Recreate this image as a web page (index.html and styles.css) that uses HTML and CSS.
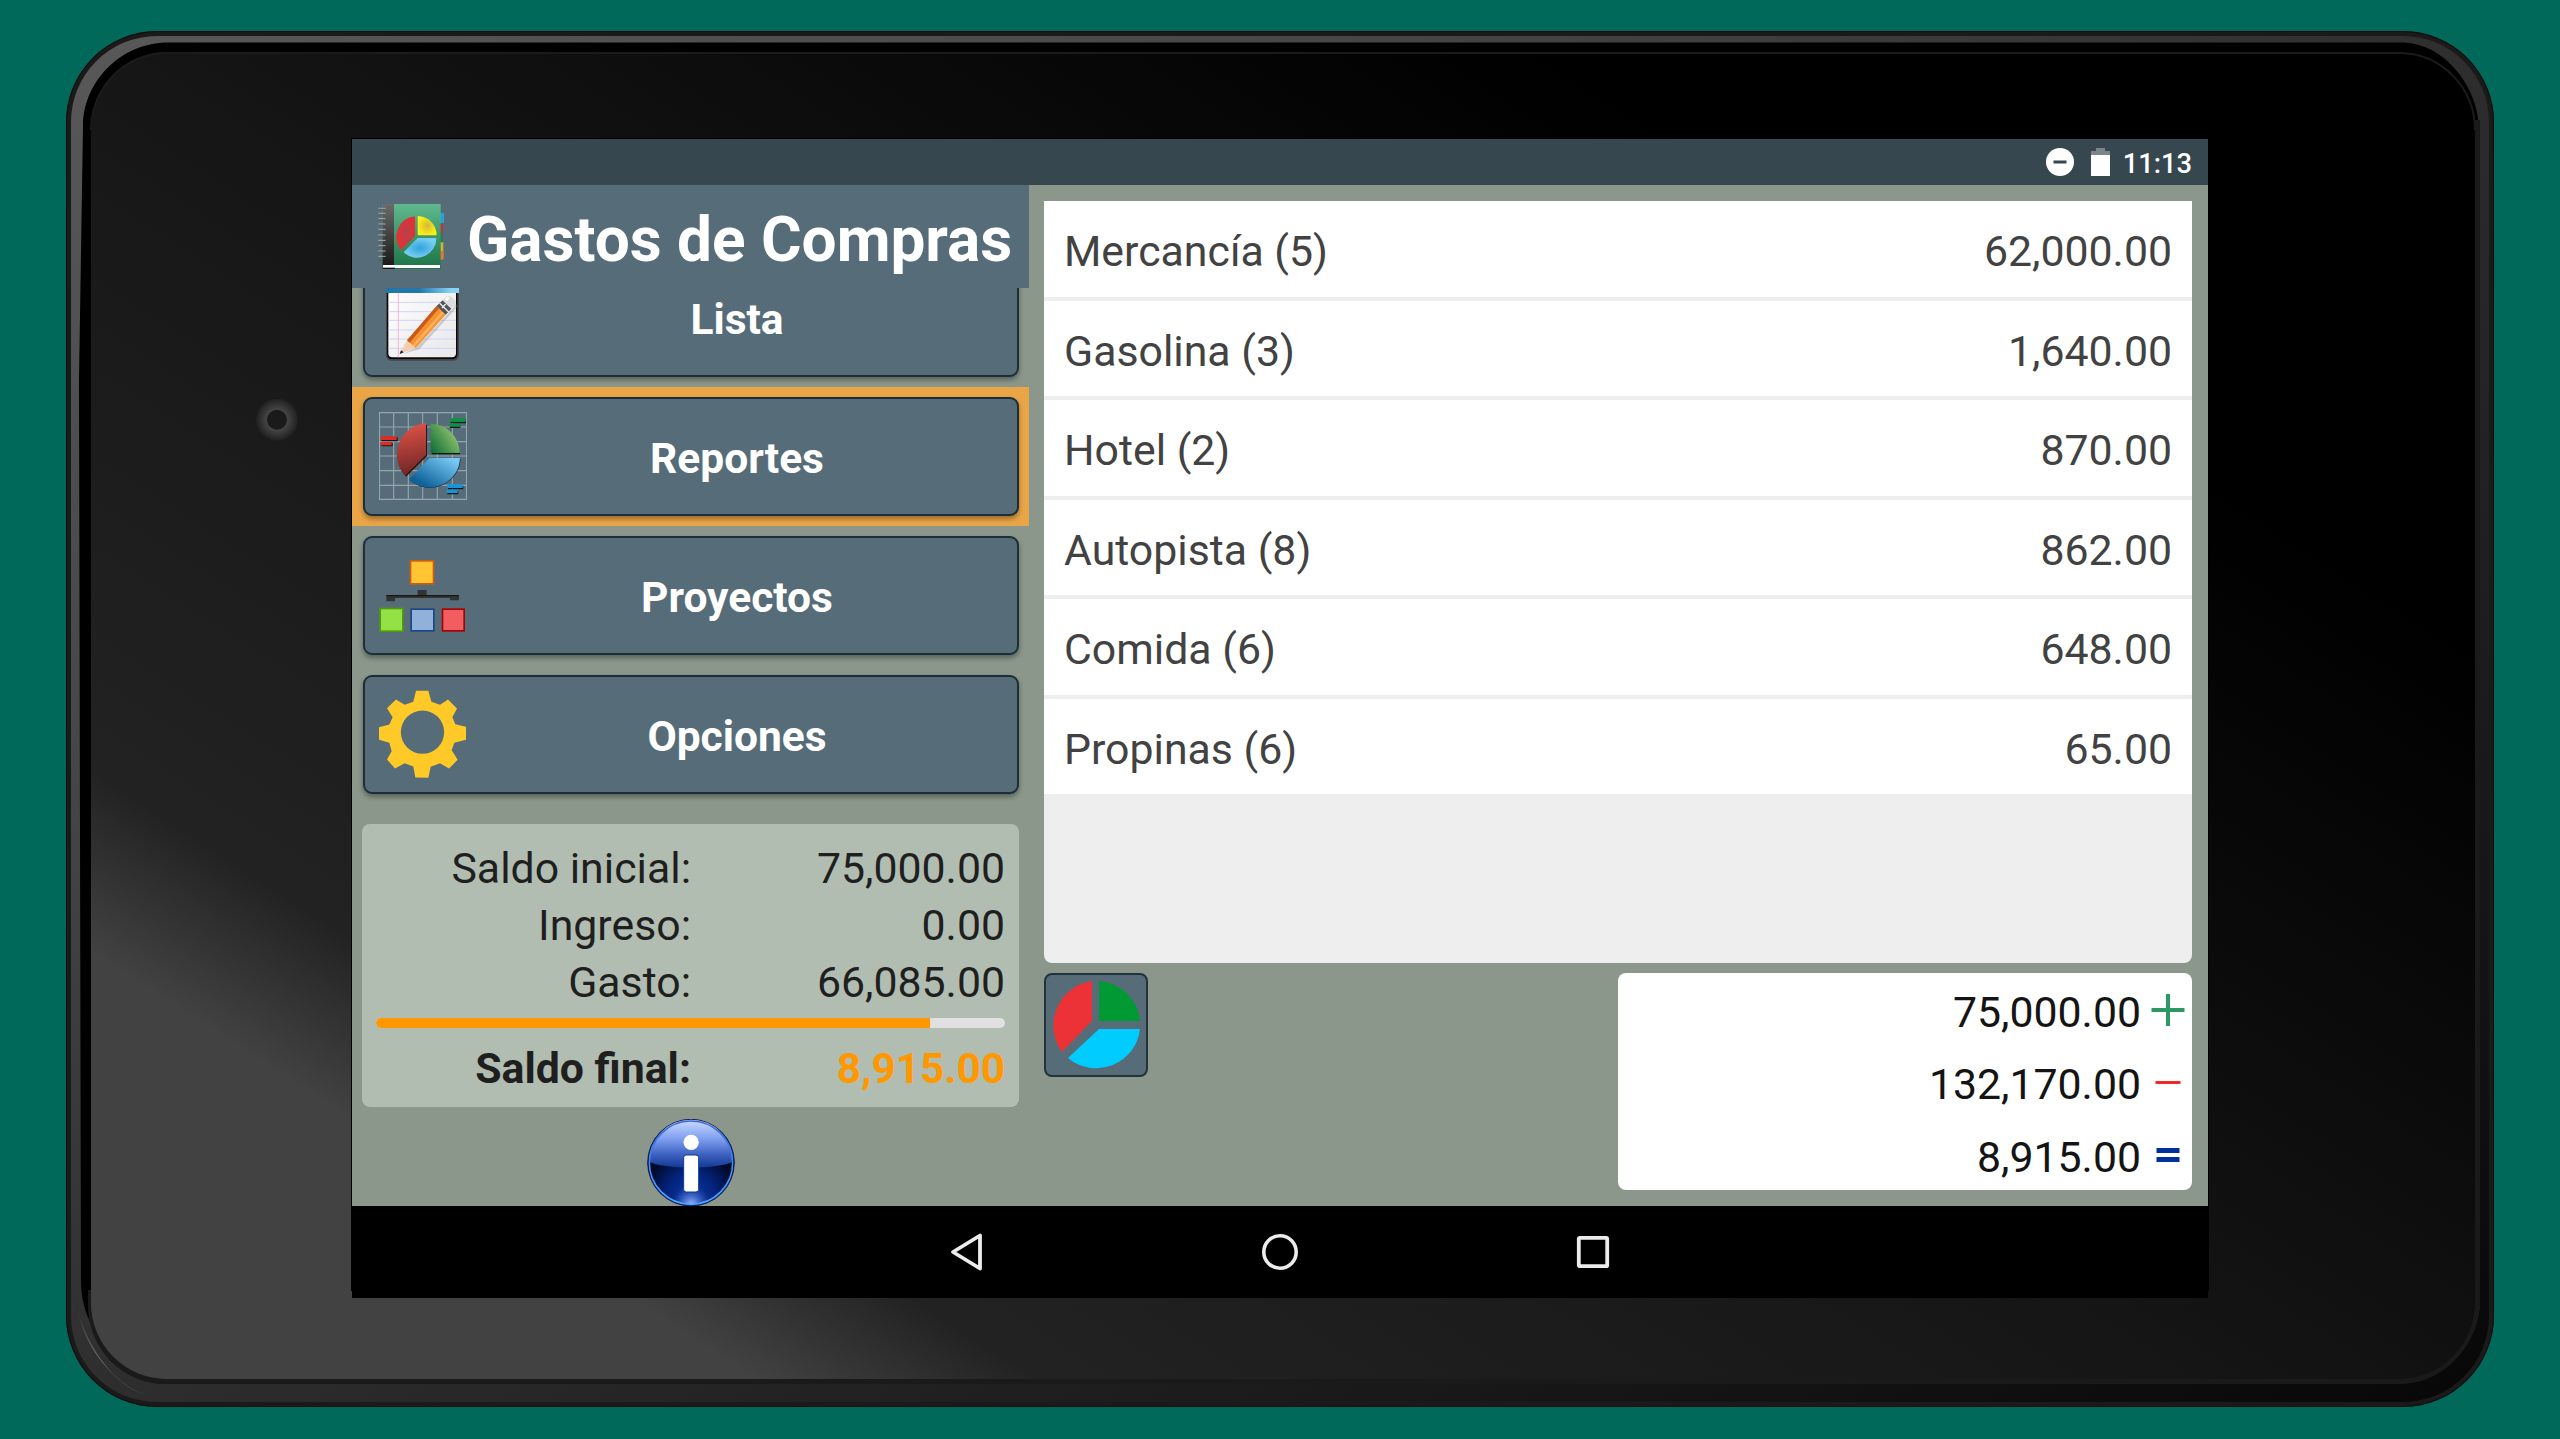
FILE: index.html
```html
<!DOCTYPE html>
<html lang="es">
<head>
<meta charset="utf-8">
<title>Gastos de Compras</title>
<link rel="stylesheet" href="styles.css">
</head>
<body>
<main class="stage">
  <svg class="tablet" viewBox="0 0 2560 1439" aria-hidden="true">
    <defs>
      <linearGradient id="glass" gradientUnits="userSpaceOnUse" x1="426.6" y1="-663.6" x2="-407" y2="633">
        <stop offset="0" stop-color="#000"/><stop offset=".512" stop-color="#161616"/>
        <stop offset=".9" stop-color="#222"/><stop offset="1" stop-color="#424242"/>
      </linearGradient>
      <linearGradient id="rim" x1="0" y1="0" x2="1" y2="1">
        <stop offset="0" stop-color="#585858"/><stop offset=".25" stop-color="#484848"/>
        <stop offset=".5" stop-color="#2e2e2e"/><stop offset="1" stop-color="#070707"/>
      </linearGradient>
      <radialGradient id="shine" gradientUnits="userSpaceOnUse" cx="98" cy="1366" r="62">
        <stop offset="0" stop-color="#747474"/><stop offset="1" stop-color="#2b2b2b"/>
      </radialGradient>
      <radialGradient id="lens">
        <stop offset=".45" stop-color="#484848"/><stop offset="1" stop-color="#202020"/>
      </radialGradient>
    </defs>
    <rect x="66" y="31" width="2428" height="1376" rx="91" fill="#1a1a1a"/>
    <rect x="66.500" y="31.500" width="2427" height="1375" rx="91" fill="none" stroke="#0d0d0d"/>
    <rect x="71" y="36" width="2418" height="1366" rx="86" fill="url(#rim)"/>
    <path d="M75 1290C77 1325 90 1352 115 1376C127 1388 140 1395 156 1398C128 1391 110 1374 96 1352C84 1333 77 1312 75 1290Z" fill="url(#shine)"/>
    <path d="M168 42.500H2405C2446 45 2474 86 2478 118V1300H92V1325C84 1312 81 1295 81 1280L79 380L83 125C84 80 122 42.500 168 42.500Z" fill="#000"/>
    <path d="M2475 118V1309A75 75 0 0 1 2400 1384H166A78 78 0 0 1 88 1306V1290H92V1309A72 72 0 0 0 164 1379H2402A73 73 0 0 0 2475 1306Z" fill="#1a1a1a"/>
    <rect x="2475" y="120" width="5" height="1190" fill="#1a1a1a"/>
    <path d="M164 1384A75 75 0 0 1 92 1325L92 1300H2480A84 84 0 0 1 2402 1384Z" fill="#1a1a1a"/>
    <rect x="91" y="52" width="2384" height="1327" rx="76" fill="url(#glass)"/>
    <path d="M91 130A76 77 0 0 1 168 53H2400A76 77 0 0 1 2475 130" fill="none" stroke="#1b1b1b" stroke-width="2"/>
    <circle cx="277" cy="419.700" r="21" fill="url(#lens)"/>
    <circle cx="277" cy="419.700" r="10" fill="#1a1a1a"/>
    <rect x="351" y="138" width="1858" height="1153" fill="#000"/>
  </svg>

  <section class="screen">
    <div class="status">
      <svg class="status-dnd" viewBox="0 0 28 28"><circle cx="14" cy="14" r="14" fill="#fff"/><path d="M7.500 14h13" stroke="#37474f" stroke-width="3"/></svg>
      <svg class="status-battery" viewBox="0 0 19 28"><path d="M0 3h5V0h9v3h5v5H0z" fill="#7a868c"/><path d="M0 7h19v21H0z" fill="#fff"/></svg>
      <span class="status-time">11:13</span>
    </div>

    <div class="app">
      <aside class="side">
        <header class="header">
          <svg class="header-icon" viewBox="78 60 198 195">
            <defs>
              <linearGradient id="cover" x1="0" y1="0" x2="0" y2="1"><stop offset="0" stop-color="#5fb98c"/><stop offset="1" stop-color="#1c7447"/></linearGradient>
              <linearGradient id="spine" x1="0" y1="0" x2="0" y2="1"><stop offset="0" stop-color="#6b6b6b"/><stop offset="1" stop-color="#151515"/></linearGradient>
              <radialGradient id="hr"><stop offset="0" stop-color="#b8404a"/><stop offset="1" stop-color="#e53035"/></radialGradient>
              <radialGradient id="hy"><stop offset="0" stop-color="#d3b836"/><stop offset="1" stop-color="#fbf014"/></radialGradient>
              <radialGradient id="hb"><stop offset="0" stop-color="#2fa3dc"/><stop offset="1" stop-color="#78cdf2"/></radialGradient>
            </defs>
            <path d="M264 86h9q3 0 3 4v24q0 4-3 4h-9z" fill="#2ba0dc"/>
            <path d="M264 119h9v28h-9z" fill="#c42f38"/><path d="M264 147h8v27h-8z" fill="#1e7f4a"/>
            <path d="M264 175h10v26h-10z" fill="#cdb42c"/><path d="M264 201h11v22q0 4-4 4h-7z" fill="#e07a33"/>
            <rect x="92" y="60" width="174" height="195" fill="url(#cover)"/>
            <path d="M92 60h34v195H92z" fill="url(#spine)"/>
            <path d="M93 243h171v9H93z" fill="#fff"/><path d="M93 251h36v4H93z" fill="#111"/>
            <path d="M79 73h22M79 88h22M79 104h22M79 120h22M79 136h22M79 153h22M79 169h22M79 185h22M79 201h22M79 217h22" stroke="#a8aeb0" stroke-width="3"/>
            <path d="M80 76h18M80 92h18M80 108h18M80 124h18M80 140h18M80 157h18M80 173h18M80 189h18M80 205h18M80 229h12" stroke="#555" stroke-width="2"/>
            <path d="M189 97A62 62 0 0 0 147 198L189 156Z" fill="url(#hr)"/>
            <path d="M197 96A58 58 0 0 1 254 154H197Z" fill="url(#hy)"/>
            <path d="M197 162H253A58 58 0 0 1 155 205Z" fill="url(#hb)"/>
          </svg>
          <h1 class="title">Gastos de Compras</h1>
        </header>

        <nav class="menu">
          <div class="menu-slot">
            <button class="menu-button">
              <svg class="menu-icon" viewBox="57 -21 264 264">
                <defs>
                  <linearGradient id="band"><stop offset=".45" stop-color="#1f78a8"/><stop offset=".9" stop-color="#8bd4f8"/></linearGradient>
                  <linearGradient id="paper" x1="0" y1="0" x2="1" y2="1"><stop offset="0" stop-color="#fff"/><stop offset="1" stop-color="#e8e8ea"/></linearGradient>
                </defs>
                <rect x="78" y="0" width="219" height="242" rx="16" fill="#444"/>
                <rect x="81" y="0" width="211" height="237" rx="14" fill="#080808"/>
                <rect x="85" y="0" width="203" height="232" rx="12" fill="url(#paper)"/>
                <path d="M85 67H288M85 95H288M85 121H288M85 150H288M85 177H288M85 205H288" stroke="#d2d2f8" stroke-width="3"/>
                <path d="M115 39V232" stroke="#f8b3d6" stroke-width="3"/>
                <path d="M78 0H297V39H78Z" fill="url(#band)"/>
                <path d="M128 222L168 203L280 84L288 72L294 78L178 208Z" fill="#777" opacity=".3"/>
                <path d="M119 222L141 181L167 204Z" fill="#f3cdb0"/><path d="M119 222L123 211L131 217Z" fill="#111"/>
                <path d="M141 181L230 78L257 104L167 204Z" fill="#f69230"/>
                <path d="M141 181L230 78L237 85L149 188Z" fill="#c95a1c"/>
                <path d="M157 196L247 94L252 99L163 201Z" fill="#ffb25b"/>
                <path d="M230 78L248 61L274 86L257 104Z" fill="#535353"/><path d="M239 70L266 96M246 84L257 72" stroke="#eee" stroke-width="4"/>
                <path d="M248 61L258 50Q270 44 281 56Q290 66 284 76L274 86Z" fill="#d9dddd"/><path d="M257 61L266 52" stroke="#fff" stroke-width="7"/>
              </svg>
              <span class="menu-label">Lista</span>
            </button>
          </div>
          <div class="menu-slot menu-slot-active">
            <button class="menu-button">
              <svg class="menu-icon" viewBox="57 396 264 264">
                <defs>
                  <linearGradient id="rr" x1=".4" y1="0" x2=".5" y2="1"><stop offset="0" stop-color="#e05246"/><stop offset="1" stop-color="#6d2525"/></linearGradient>
                  <linearGradient id="rg" x1="0" y1="1" x2="1" y2=".3"><stop offset="0" stop-color="#096a35"/><stop offset="1" stop-color="#9ccb72"/></linearGradient>
                  <linearGradient id="rb" x1=".2" y1=".8" x2=".9" y2=".1"><stop offset="0" stop-color="#10639a"/><stop offset="1" stop-color="#78c8f5"/></linearGradient>
                </defs>
                <path d="M58.500 397V659M101 397V659M145 397V659M188 397V659M232 397V659M277 397V659M319.500 397V659M57 398H321M57 441H321M57 485H321M57 528H321M57 572H321M57 616H321M57 658H321" stroke="#95a4ad" stroke-width="3.400" fill="none"/>
                <path d="M201 434A95 95 0 0 0 138 590L201 528Z" fill="#271316"/>
                <path d="M215 435V523H300V519L216 431Z" fill="#06190e"/>
                <path d="M150 601A92 92 0 0 0 302 538L208 534Z" fill="#08263e"/>
                <path d="M198 430A94 94 0 0 0 135 587L198 525Z" fill="url(#rr)"/>
                <path d="M212 431A88 88 0 0 1 299 519H212Z" fill="url(#rg)"/>
                <path d="M208 534H300A91 91 0 0 1 147 598Z" fill="url(#rb)"/>
                <path d="M64 472h49v12H64zM64 489h34v10H64zM272 419h46v11h-46zM270 434h31v10h-31zM264 617h46v11h-46zM262 633h33v10h-33z" fill="#141a1e"/>
                <path d="M62 469h48v11H62zM62 486h33v10H62z" fill="#e12a22"/>
                <path d="M270 415h47v11h-47zM268 431h32v9h-32z" fill="#0a9440"/>
                <path d="M262 613h46v11h-46zM260 629h33v10h-33z" fill="#1595e0"/>
              </svg>
              <span class="menu-label">Reportes</span>
            </button>
          </div>
          <div class="menu-slot">
            <button class="menu-button">
              <svg class="menu-icon" viewBox="57 63 264 264">
                <path d="M173 180h27v15h97v16h-27v-7H105v10H79v-19h94z" fill="#333"/><path d="M79 197H297" stroke="#111" stroke-width="3"/>
                <rect x="151.500" y="92.500" width="69" height="69" fill="#ffc533" stroke="#cf5a10" stroke-width="5"/>
                <rect x="60.500" y="235.500" width="68" height="68" fill="#93e145" stroke="#4f9c0c" stroke-width="5"/>
                <rect x="153.500" y="237.500" width="68" height="65" fill="#90b2da" stroke="#1c4687" stroke-width="5"/>
                <rect x="247.500" y="237.500" width="65" height="65" fill="#f25d5f" stroke="#a20306" stroke-width="5"/>
              </svg>
              <span class="menu-label">Proyectos</span>
            </button>
          </div>
          <div class="menu-slot">
            <button class="menu-button">
              <svg class="menu-icon" viewBox="57 481.500 264 264">
                <path fill="#ffca28" fill-rule="evenodd" d="M168 484L205 484L214 517L240 526L264 510L291 537L277 563L286 584L318 592V631L283 640L275 662L293 691L267 717L240 701L212 712L205 745L166 744L160 711L134 701L105 717L81 690L95 665L88 640L55 630V594L88 585L98 563L81 536L108 510L134 526L160 517ZM187.500 543A65 65 0 1 0 187.500 673A65 65 0 1 0 187.500 543Z"/>
              </svg>
              <span class="menu-label">Opciones</span>
            </button>
          </div>
        </nav>

        <section class="summary">
          <div class="summary-row"><span class="summary-label">Saldo inicial:</span><span class="summary-value">75,000.00</span></div>
          <div class="summary-row"><span class="summary-label">Ingreso:</span><span class="summary-value">0.00</span></div>
          <div class="summary-row"><span class="summary-label">Gasto:</span><span class="summary-value">66,085.00</span></div>
          <div class="progress"><div class="progress-fill" style="width:88.1%"></div></div>
          <div class="summary-row summary-final"><span class="summary-label">Saldo final:</span><span class="summary-value summary-amount">8,915.00</span></div>
        </section>

        <svg class="info" viewBox="52 57 264 264">
          <defs>
            <linearGradient id="gloss" x1="0" y1="0" x2="0" y2="1"><stop offset="0" stop-color="#cbdcff"/><stop offset=".4" stop-color="#7f9ff0"/><stop offset=".75" stop-color="#3a5ebd"/><stop offset="1" stop-color="#123a94"/></linearGradient>
            <radialGradient id="deep" gradientUnits="userSpaceOnUse" cx="184" cy="290" r="135"><stop offset="0" stop-color="#0b39a5"/><stop offset=".55" stop-color="#03237b"/><stop offset="1" stop-color="#010a2b"/></radialGradient>
            <radialGradient id="glow" gradientUnits="userSpaceOnUse" cx="184" cy="315" r="58"><stop offset="0" stop-color="#a5c1ff"/><stop offset="1" stop-color="#3d66d8" stop-opacity="0"/></radialGradient>
            <linearGradient id="ring" x1="0" y1="0" x2="0" y2="1"><stop offset="0" stop-color="#3866d8"/><stop offset="1" stop-color="#4aa9ff"/></linearGradient>
          </defs>
          <circle cx="184" cy="188" r="130" fill="url(#deep)" stroke="#131a58" stroke-width="3"/>
          <path d="M58 185A126 126 0 0 1 310 185C270 208 98 208 58 185Z" fill="url(#gloss)"/>
          <circle cx="184" cy="188" r="126" fill="url(#glow)"/>
          <circle cx="184" cy="188" r="125" fill="none" stroke="url(#ring)" stroke-width="5"/>
          <circle cx="184.500" cy="127" r="23" fill="#fff"/>
          <rect x="162" y="165" width="45" height="111" rx="8" fill="#fff" stroke="#0c3a9d" stroke-width="3"/>
        </svg>
      </aside>

      <section class="content">
        <div class="list">
          <div class="list-row"><span>Mercancía (5)</span><span>62,000.00</span></div>
          <div class="list-row"><span>Gasolina (3)</span><span>1,640.00</span></div>
          <div class="list-row"><span>Hotel (2)</span><span>870.00</span></div>
          <div class="list-row"><span>Autopista (8)</span><span>862.00</span></div>
          <div class="list-row"><span>Comida (6)</span><span>648.00</span></div>
          <div class="list-row"><span>Propinas (6)</span><span>65.00</span></div>
        </div>
        <div class="bottom">
          <button class="chart-button">
            <svg class="chart-icon" viewBox="0 0 90 90">
              <path d="M41 1A45 45 0 0 0 11 72L41 41Z" fill="#ed3237"/>
              <path d="M48 1A44 44 0 0 1 89 41H48Z" fill="#009933"/>
              <path d="M48 49H89A44 44 0 0 1 17 78Z" fill="#00ccff"/>
            </svg>
          </button>
          <div class="totals">
            <div class="totals-row"><span>75,000.00</span><svg class="sign" viewBox="0 0 34 34"><path d="M.500 17h33M17 1v32" stroke="#2c9863" stroke-width="4"/></svg></div>
            <div class="totals-row"><span>132,170.00</span><svg class="sign" viewBox="0 0 34 34"><path d="M4.500 17.500h25" stroke="#f51a1a" stroke-width="2.800"/></svg></div>
            <div class="totals-row"><span>8,915.00</span><svg class="sign" viewBox="0 0 34 34"><path d="M5.500 12.500h23M5.500 21.500h23" stroke="#00309a" stroke-width="5"/></svg></div>
          </div>
        </div>
      </section>
    </div>

    <div class="navbar">
      <svg class="nav-icon" viewBox="0 0 40 40"><path d="M33 3.500V36.500L6 20Z" fill="none" stroke="#ececec" stroke-width="3.800" stroke-linejoin="round"/></svg>
      <svg class="nav-icon" viewBox="0 0 40 40"><circle cx="20" cy="20" r="16.200" fill="none" stroke="#ececec" stroke-width="3.600"/></svg>
      <svg class="nav-icon" viewBox="0 0 40 40"><rect x="5.800" y="5.800" width="28.400" height="28.400" rx="1" fill="none" stroke="#ececec" stroke-width="3.800"/></svg>
    </div>
  </section>
</main>
</body>
</html>
```
FILE: styles.css
```css
* { box-sizing: border-box; }

body {
  margin: 0;
  background: #00695a;
  font-family: Roboto, "Liberation Sans", sans-serif;
  font-size: 42.800px;
}

.stage {
  position: relative;
  width: 2560px;
  height: 1439px;
  padding: 139px 352px 0;
  overflow: hidden;
}

/* Tablet body drawn behind the screen */
.tablet {
  position: absolute;
  inset: 0;
  width: 2560px;
  height: 1439px;
}

.screen {
  position: relative;
  display: flex;
  flex-direction: column;
  width: 1856px;
  height: 1159px;
  background: #000;
}

.status {
  display: flex;
  align-items: center;
  justify-content: flex-end;
  height: 46px;
  padding-right: 16px;
  background: #37474f;
}
.status-dnd { width: 28px; height: 28px; margin-right: 17px; }
.status-battery { width: 19px; height: 28px; margin-right: 13px; }
.status-time { padding-top: 3px; color: #fff; font-size: 27.300px; font-weight: 500; line-height: 40px; }

.app {
  display: flex;
  height: 1021px;
  overflow: hidden;
  background: #8a978a;
}

.side {
  display: flex;
  flex-direction: column;
  align-items: center;
  width: 677px;
  flex: none;
}

.header {
  display: flex;
  flex: none;
  align-items: center;
  width: 100%;
  height: 103px;
  padding-left: 26px;
  background: #566d79;
}
.header-icon { width: 66px; height: 65px; margin-right: 23px; }
.title { margin: 0; padding-top: 7px; color: #fff; font-size: 62.100px; font-weight: 700; line-height: 76px; white-space: nowrap; }

.menu { flex: none; width: 100%; height: 517px; overflow: hidden; }
.menu-slot { height: 139px; padding: 10px 10px 10px 11px; }
.menu-slot:first-child { margin-top: -40px; }
.menu-slot-active { background: #eaa547; }
.menu-button {
  display: flex;
  width: 100%;
  height: 119px;
  padding: 0;
  border: 2px solid #1c2f39;
  border-radius: 9px;
  background: #566d79;
  box-shadow: 0 3px 5px rgba(0, 0, 0, .35);
  color: #fff;
  font: 700 42.500px/119px Roboto, "Liberation Sans", sans-serif;
}
.menu-icon { flex: none; width: 88px; height: 88px; margin: 13px 0 0 14px; }
.menu-label { flex: 1; margin-left: -10px; line-height: 120px; }

.summary {
  flex: none;
  width: 657px;
  height: 283px;
  margin-top: 19px;
  padding: 16px 14px 0 14px;
  border-radius: 8px;
  background: #b2bdb2;
  color: #1f1f1f;
}
.summary-row { display: flex; height: 57px; line-height: 57px; }
.summary-label { width: 315px; text-align: right; }
.summary-value { flex: 1; text-align: right; }
.summary-final { font-weight: 700; }
.summary-amount { color: #ff9800; font-size: 42.300px; }
.progress { height: 10px; margin: 7px 0 12px; overflow: hidden; border-radius: 5px; background: #e0e0e0; }
.progress-fill { height: 100%; background: #ff9800; }

.info { flex: none; width: 88px; height: 88px; margin-top: 12px; }

.content { flex: 1; padding: 16px 16px 0 15px; }

.list {
  height: 762px;
  overflow: hidden;
  border-radius: 0 0 8px 8px;
  background: #eee;
  color: #424242;
}
.list-row {
  display: flex;
  justify-content: space-between;
  height: 95.500px;
  margin-bottom: 4px;
  padding: 5px 20px 0;
  background: #fff;
  line-height: 90px;
}

.bottom { display: flex; justify-content: space-between; align-items: flex-start; margin-top: 10px; }
.chart-button {
  display: grid;
  place-items: center;
  width: 104px;
  height: 104px;
  padding: 0;
  border: 2px solid #22333c;
  border-radius: 8px;
  background: #566d79;
}
.chart-icon { width: 90px; height: 90px; }

.totals { width: 574px; height: 217px; padding: 3px 7px 0 0; border-radius: 8px; background: #fff; color: #141414; }
.totals-row { display: flex; justify-content: flex-end; height: 72.400px; line-height: 73px; }
.sign { width: 34px; height: 34px; margin: 17px 0 0 10px; }

.navbar { display: flex; flex: 1; justify-content: center; align-items: center; gap: 273px; padding-bottom: 1px; }
.nav-icon { width: 40px; height: 40px; }
```
